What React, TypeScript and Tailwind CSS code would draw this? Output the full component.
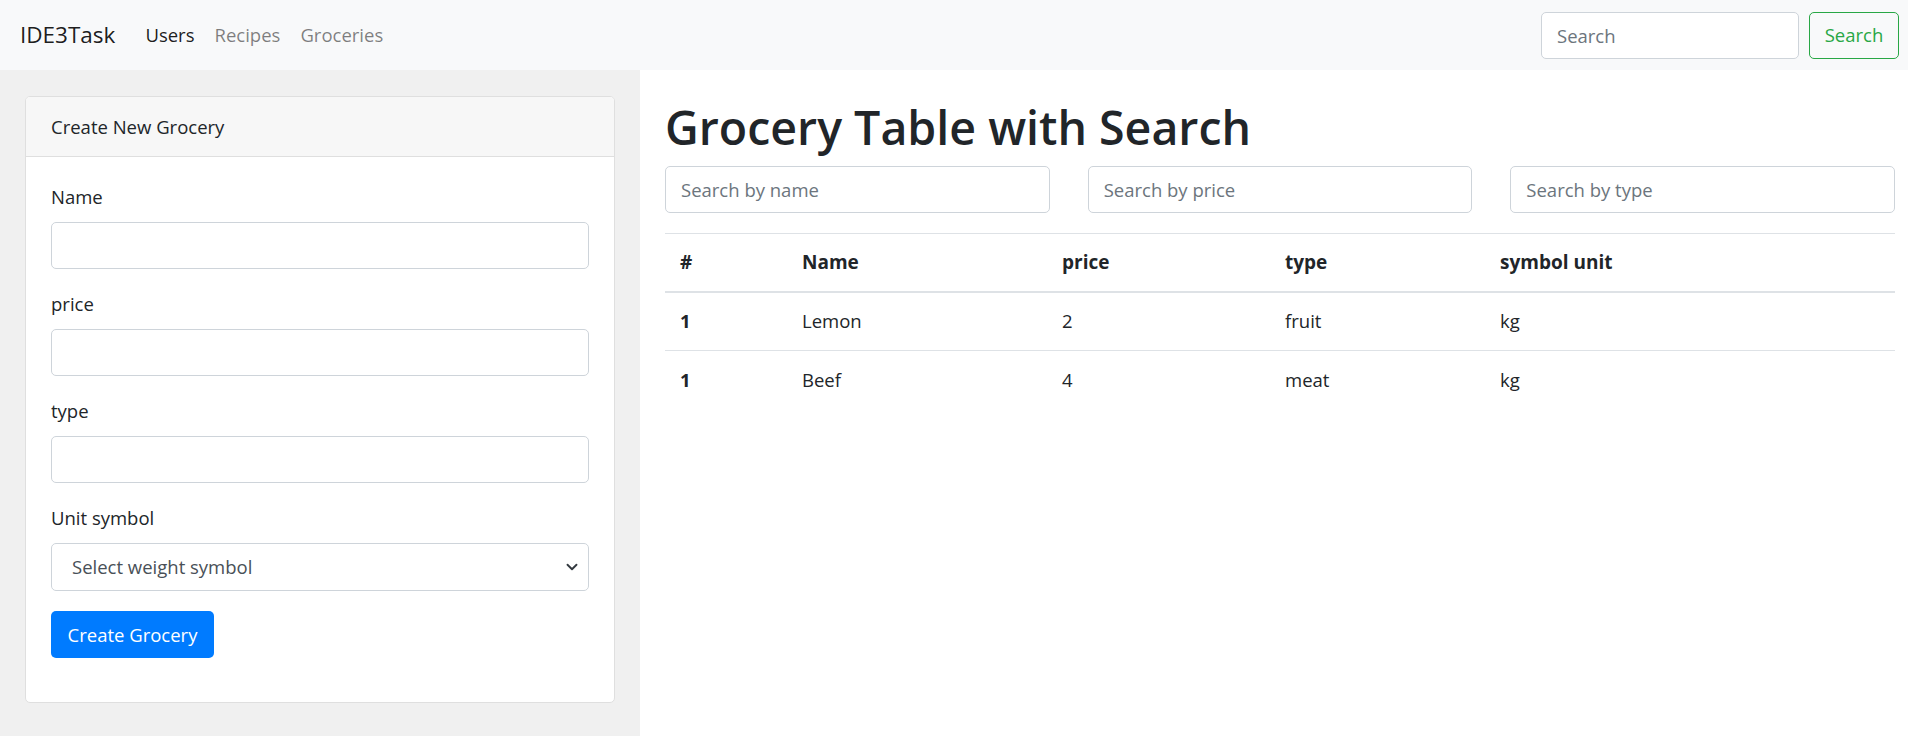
import { FC } from 'react';

const rows = [
  { id: 1, name: 'Lemon', price: 2, type: 'fruit', unit: 'kg' },
  { id: 1, name: 'Beef', price: 4, type: 'meat', unit: 'kg' },
];

const inputCls =
  'block w-full h-[47px] rounded-[5px] border border-[#ced4da] bg-white px-[15px] text-[18.5px] text-[#495057] placeholder:text-[#6c757d] outline-none';

const Field: FC<{ label: string }> = ({ label }) => (
  <div className="mb-[20px]">
    <label className="block mb-[10px] leading-[30px] text-[18.5px] text-[#212529]">{label}</label>
    <input className={inputCls} />
  </div>
);

const App: FC = () => {
  return (
    <div className="min-h-[736px] flex flex-col font-['Open_Sans',sans-serif] text-[#212529] bg-white">
      <nav className="h-[70px] shrink-0 flex items-center bg-[#f8f9fa] pl-[20px] pr-[9px]">
        <span className="text-[22.5px] leading-[38px] text-black/90 mr-[20px]">IDE3Task</span>
        <div className="flex items-center text-[18.5px] leading-[30px]">
          <a className="px-[10px] text-black/90">Users</a>
          <a className="px-[10px] text-black/50">Recipes</a>
          <a className="px-[10px] text-black/50">Groceries</a>
        </div>
        <div className="ml-auto flex items-center gap-[10px]">
          <input placeholder="Search" className="w-[258px] h-[47px] rounded-[5px] border border-[#ced4da] bg-white px-[15px] text-[18.5px] placeholder:text-[#6c757d] outline-none" />
          <button className="h-[47px] w-[90px] rounded-[5px] border border-[#28a745] text-[#28a745] text-[18.5px]">Search</button>
        </div>
      </nav>

      <div className="flex flex-1">
        <aside className="w-[640px] shrink-0 bg-[#f0f0f0] pt-[26px] pb-[33px] px-[25px]">
          <div className="bg-white border border-[#dfdfdf] rounded-[5px] overflow-hidden">
            <div className="h-[60px] flex items-center px-[25px] bg-[#f7f7f7] border-b border-[#dfdfdf] text-[18.5px]">
              Create New Grocery
            </div>
            <div className="px-[25px] pt-[25px] pb-[44px]">
              <Field label="Name" />
              <Field label="price" />
              <Field label="type" />
              <div className="mb-[20px]">
                <label className="block mb-[10px] leading-[30px] text-[18.5px]">Unit symbol</label>
                <div className="relative">
                  <select className="block w-full h-[48px] appearance-none rounded-[5px] border border-[#ced4da] bg-white pl-[20px] pr-[40px] text-[18.5px] text-[#495057] outline-none">
                    <option>Select weight symbol</option>
                  </select>
                  <svg className="absolute right-[11px] top-1/2 -translate-y-1/2 pointer-events-none" width="12" height="12" viewBox="0 0 16 16">
                    <path d="M2 5l6 6 6-6" fill="none" stroke="#343a40" strokeWidth="2.5" strokeLinecap="round" strokeLinejoin="round" />
                  </svg>
                </div>
              </div>
              <button className="h-[47px] w-[163px] rounded-[5px] bg-[#007bff] text-white text-[18.5px]">Create Grocery</button>
            </div>
          </div>
        </aside>

        <main className="flex-1 pl-[25px] pr-[13px]">
          <h1 className="mt-[27px] mb-[9px] text-[46.5px] leading-[60px] font-semibold">Grocery Table with Search</h1>
          <div className="grid grid-cols-3 gap-[38px]">
            <input placeholder="Search by name" className={inputCls + ' h-[46px]'} />
            <input placeholder="Search by price" className={inputCls + ' h-[46px]'} />
            <input placeholder="Search by type" className={inputCls + ' h-[46px]'} />
          </div>
          <table className="mt-[20px] w-full border-collapse text-[18.5px] text-left">
            <thead>
              <tr className="border-t border-[#dee2e6] border-b-2">
                <th className="w-[122px] px-[15px] h-[58px] font-bold text-[19px]">#</th>
                <th className="w-[260px] px-[15px] font-bold text-[19px]">Name</th>
                <th className="w-[223px] px-[15px] font-bold text-[19px]">price</th>
                <th className="w-[215px] px-[15px] font-bold text-[19px]">type</th>
                <th className="px-[15px] font-bold text-[19px]">symbol unit</th>
              </tr>
            </thead>
            <tbody>
              {rows.map((r, i) => (
                <tr key={r.name} className={i > 0 ? 'border-t border-[#dee2e6]' : ''}>
                  <td className="px-[15px] h-[59px] font-bold">{r.id}</td>
                  <td className="px-[15px]">{r.name}</td>
                  <td className="px-[15px]">{r.price}</td>
                  <td className="px-[15px]">{r.type}</td>
                  <td className="px-[15px]">{r.unit}</td>
                </tr>
              ))}
            </tbody>
          </table>
        </main>
      </div>
    </div>
  );
};

export default App;
